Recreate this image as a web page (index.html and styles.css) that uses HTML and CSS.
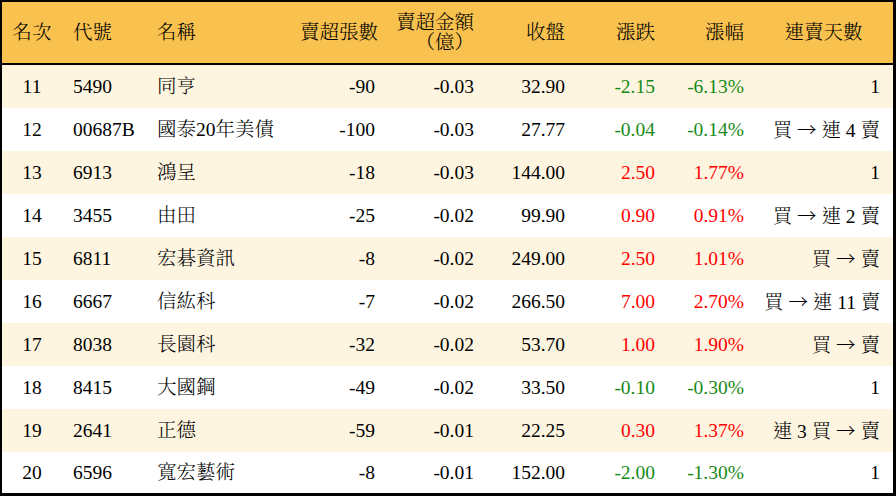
FILE: index.html
```html
<!DOCTYPE html>
<html lang="zh-Hant">
<head>
<meta charset="utf-8">
<title>賣超排行</title>
<link rel="stylesheet" href="styles.css">
</head>
<body>
<div class="frame">
<table class="rank">
  <colgroup>
    <col class="c1"><col class="c2"><col class="c3"><col class="c4"><col class="c5"><col class="c6"><col class="c7"><col class="c8"><col class="c9">
  </colgroup>
  <thead>
    <tr>
      <th class="ctr">名次</th>
      <th class="lft">代號</th>
      <th class="lft">名稱</th>
      <th class="rgt">賣超張數</th>
      <th class="rgt two">賣超金額<br>（億）</th>
      <th class="rgt">收盤</th>
      <th class="rgt">漲跌</th>
      <th class="rgt">漲幅</th>
      <th class="ctr last">連賣天數</th>
    </tr>
  </thead>
  <tbody>
    <tr><td class="ctr">11</td><td class="lft">5490</td><td class="lft">同亨</td><td class="rgt">-90</td><td class="rgt">-0.03</td><td class="rgt">32.90</td><td class="rgt dn">-2.15</td><td class="rgt dn">-6.13%</td><td class="rgt days">1</td></tr>
    <tr><td class="ctr">12</td><td class="lft">00687B</td><td class="lft">國泰20年美債</td><td class="rgt">-100</td><td class="rgt">-0.03</td><td class="rgt">27.77</td><td class="rgt dn">-0.04</td><td class="rgt dn">-0.14%</td><td class="rgt days">買 <span class="arr">→</span> 連 4 賣</td></tr>
    <tr><td class="ctr">13</td><td class="lft">6913</td><td class="lft">鴻呈</td><td class="rgt">-18</td><td class="rgt">-0.03</td><td class="rgt">144.00</td><td class="rgt up">2.50</td><td class="rgt up">1.77%</td><td class="rgt days">1</td></tr>
    <tr><td class="ctr">14</td><td class="lft">3455</td><td class="lft">由田</td><td class="rgt">-25</td><td class="rgt">-0.02</td><td class="rgt">99.90</td><td class="rgt up">0.90</td><td class="rgt up">0.91%</td><td class="rgt days">買 <span class="arr">→</span> 連 2 賣</td></tr>
    <tr><td class="ctr">15</td><td class="lft">6811</td><td class="lft">宏碁資訊</td><td class="rgt">-8</td><td class="rgt">-0.02</td><td class="rgt">249.00</td><td class="rgt up">2.50</td><td class="rgt up">1.01%</td><td class="rgt days">買 <span class="arr">→</span> 賣</td></tr>
    <tr><td class="ctr">16</td><td class="lft">6667</td><td class="lft">信紘科</td><td class="rgt">-7</td><td class="rgt">-0.02</td><td class="rgt">266.50</td><td class="rgt up">7.00</td><td class="rgt up">2.70%</td><td class="rgt days">買 <span class="arr">→</span> 連 11 賣</td></tr>
    <tr><td class="ctr">17</td><td class="lft">8038</td><td class="lft">長園科</td><td class="rgt">-32</td><td class="rgt">-0.02</td><td class="rgt">53.70</td><td class="rgt up">1.00</td><td class="rgt up">1.90%</td><td class="rgt days">買 <span class="arr">→</span> 賣</td></tr>
    <tr><td class="ctr">18</td><td class="lft">8415</td><td class="lft">大國鋼</td><td class="rgt">-49</td><td class="rgt">-0.02</td><td class="rgt">33.50</td><td class="rgt dn">-0.10</td><td class="rgt dn">-0.30%</td><td class="rgt days">1</td></tr>
    <tr><td class="ctr">19</td><td class="lft">2641</td><td class="lft">正德</td><td class="rgt">-59</td><td class="rgt">-0.01</td><td class="rgt">22.25</td><td class="rgt up">0.30</td><td class="rgt up">1.37%</td><td class="rgt days">連 3 買 <span class="arr">→</span> 賣</td></tr>
    <tr><td class="ctr">20</td><td class="lft">6596</td><td class="lft">寬宏藝術</td><td class="rgt">-8</td><td class="rgt">-0.01</td><td class="rgt">152.00</td><td class="rgt dn">-2.00</td><td class="rgt dn">-1.30%</td><td class="rgt days">1</td></tr>
  </tbody>
</table>
</div>
</body>
</html>
```
FILE: styles.css
```css
html, body {
  margin: 0;
  padding: 0;
  background: #ffffff;
}

body {
  width: 896px;
  height: 496px;
  overflow: hidden;
}

.frame {
  width: 896px;
  box-sizing: border-box;
  border-top: 2px solid #000;
  border-left: 2px solid #000;
  border-right: 3px solid #000;
  border-bottom: 4px solid #000;
}

.rank {
  width: 100%;
  table-layout: fixed;
  border-collapse: collapse;
  font-family: "Liberation Serif", "Noto Serif CJK TC", "Noto Sans CJK TC", serif;
  font-size: 19.5px;
  font-weight: 300;
  color: #000;
}

.c1 { width: 60px; }
.c2 { width: 84px; }
.c3 { width: 144px; }
.c4 { width: 95px; }
.c5 { width: 99px; }
.c6 { width: 91px; }
.c7 { width: 90px; }
.c8 { width: 89px; }
.c9 { width: 139px; }

.rank th {
  height: 60px;
  padding: 0 10px;
  background: #f9c24f;
  font-weight: 300;
  line-height: 20px;
  border-bottom: 2px solid #000;
  white-space: nowrap;
}

.rank th.two {
  padding-top: 1px;
}

.rank td {
  height: 43px;
  padding: 0 10px;
  white-space: nowrap;
  line-height: 22px;
}

.rank tbody tr:nth-child(odd) td {
  background: #fef5e1;
}

.rank tbody tr:nth-child(even) td {
  background: #ffffff;
}

.rank tbody tr:last-child td {
  height: 41px;
}

.ctr { text-align: center; }
.lft { text-align: left; padding-left: 11px !important; }
.rgt { text-align: right; }
.rank td.days { padding-right: 13px; }

.arr {
  font-family: "Noto Sans CJK TC", sans-serif;
  font-weight: 300;
}

.up { color: #ff0000; }
.dn { color: #168a16; }
```
